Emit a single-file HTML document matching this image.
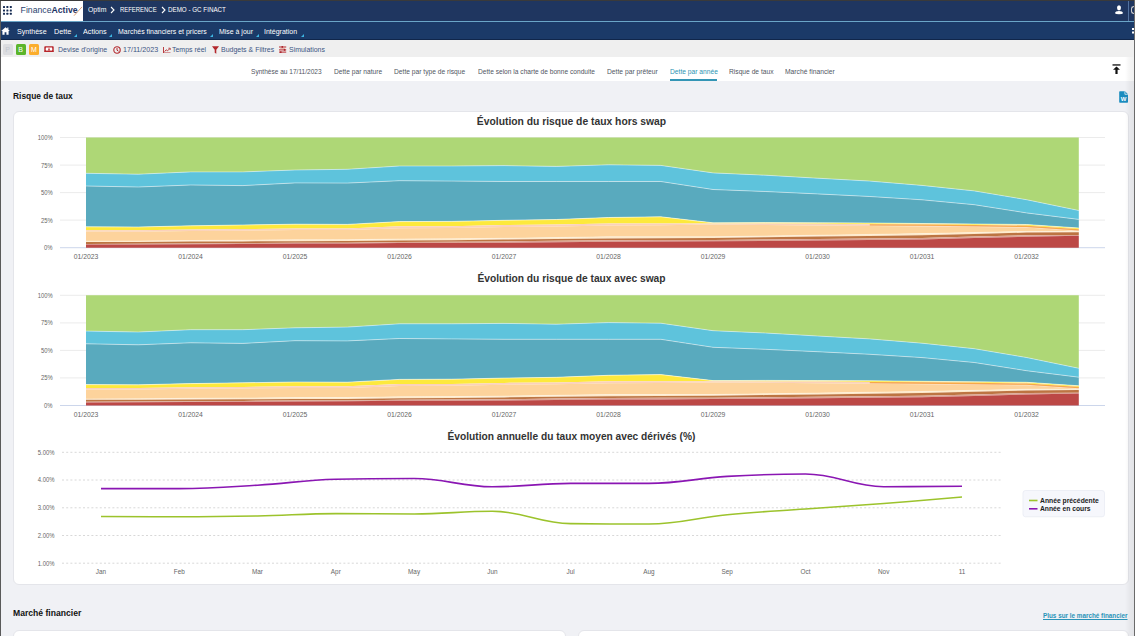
<!DOCTYPE html>
<html><head><meta charset="utf-8">
<style>
*{margin:0;padding:0;box-sizing:border-box}
html,body{width:1135px;height:636px;overflow:hidden}
body{position:relative;background:#f0f1f5;font-family:"Liberation Sans",sans-serif;color:#222}
.a{position:absolute;white-space:nowrap;transform-origin:0 0}
#frameL{left:0;top:0;width:1px;height:636px;background:#5a5a5a}
#frameT{left:0;top:0;width:1135px;height:1px;background:#3a3a3a}
#frameR{left:1134px;top:0;width:1px;height:636px;background:#6a6a6a}
#frameR2{left:1125px;top:57px;width:9px;height:579px;background:linear-gradient(90deg,rgba(0,0,0,0),rgba(0,0,0,0.035) 45%,rgba(0,0,0,0.06))}
#top{left:1px;top:1px;width:1133px;height:20px;background:#1f3660}
#logo{left:1px;top:1px;width:82px;height:20px;background:#fff}
#tline{left:1px;top:21px;width:1133px;height:1px;background:#6aa6c8}
#nav{left:1px;top:22px;width:1133px;height:17.5px;background:#1b3a68}
#navb{left:1px;top:39px;width:1133px;height:1px;background:#10264a}
#tool{left:1px;top:40px;width:1133px;height:17px;background:#efefef}
#tabs{left:1px;top:57px;width:1133px;height:24px;background:#fff}
.tw{color:#fff;font-size:7.2px;top:5.2px}
.nv{color:#fff;font-size:7.6px;top:26.5px}
.tri{width:0;height:0;border-left:3px solid transparent;border-bottom:3px solid #3db5e2;top:33.8px}
.tb{color:#3c5583;font-size:7.6px;top:45px}
.tab{color:#50555f;font-size:7.2px;top:67px}
.h{font-weight:bold;font-size:9px;color:#111}
.card{background:#fff;border:1px solid #e4e5ea;border-radius:6px}
.ttl{font-weight:bold;font-size:10.5px;color:#333;text-align:center;transform-origin:50% 0}
svg text.ax{font-family:"Liberation Sans",sans-serif;font-size:6.4px;fill:#666}
svg text.axx{font-family:"Liberation Sans",sans-serif;font-size:6.8px;fill:#666}
svg text.ax2{font-family:"Liberation Sans",sans-serif;font-size:6.4px;fill:#666}
svg text.leg{font-family:"Liberation Sans",sans-serif;font-size:7.4px;fill:#222;font-weight:bold}
.badge{top:44px;width:10px;height:11px;border-radius:1.5px;color:#fff;font-size:7px;text-align:center;line-height:11px}
</style></head>
<body>
<div class="a" id="top"></div>
<div class="a" id="logo"></div>
<!-- grid icon -->
<svg class="a" style="left:2.5px;top:6px" width="9" height="9" viewBox="0 0 9 9">
<g fill="#142a52">
<rect x="0" y="0" width="2" height="2" rx="0.5"/><rect x="3.4" y="0" width="2" height="2" rx="0.5"/><rect x="6.8" y="0" width="2" height="2" rx="0.5"/>
<rect x="0" y="3.4" width="2" height="2" rx="0.5"/><rect x="3.4" y="3.4" width="2" height="2" rx="0.5"/><rect x="6.8" y="3.4" width="2" height="2" rx="0.5"/>
<rect x="0" y="6.8" width="2" height="2" rx="0.5"/><rect x="3.4" y="6.8" width="2" height="2" rx="0.5"/><rect x="6.8" y="6.8" width="2" height="2" rx="0.5"/>
</g></svg>
<div class="a" id="fa" style="left:20.6px;top:4.9px;font-size:8.7px;color:#2a3f6e">Finance<span style="font-weight:bold;color:#1d3264">Active</span></div>
<svg class="a" style="left:73px;top:6px" width="10" height="11" viewBox="0 0 10 11"><line x1="1" y1="9.7" x2="9" y2="0.9" stroke="#dd9a66" stroke-width="0.9"/></svg>
<div class="a tw" style="left:88px;transform:scaleX(0.958)">Optim</div>
<svg class="a" style="left:109.5px;top:6px" width="5" height="8" viewBox="0 0 5 8"><path d="M1 1 L4 4 L1 7" fill="none" stroke="#fff" stroke-width="1.1"/></svg>
<div class="a tw" style="left:120px;transform:scaleX(0.826)">REFERENCE</div>
<svg class="a" style="left:160.5px;top:6px" width="5" height="8" viewBox="0 0 5 8"><path d="M1 1 L4 4 L1 7" fill="none" stroke="#fff" stroke-width="1.1"/></svg>
<div class="a tw" style="left:168px;transform:scaleX(0.868)">DEMO - GC FINACT</div>
<!-- user icon -->
<svg class="a" style="left:1114px;top:4px" width="10" height="11" viewBox="0 0 10 11"><ellipse cx="5" cy="3.8" rx="2" ry="2.6" fill="#fff"/><path d="M1 9.2 Q1.3 7 5 7 Q8.7 7 9 9.2 Q8.5 10.2 5 10.2 Q1.5 10.2 1 9.2 Z" fill="#fff"/></svg>
<div class="a" style="left:1127.5px;top:1px;width:1px;height:20px;background:#5272a0"></div>
<div class="a" style="left:1131px;top:6px;width:3px;height:8px;border:1px solid #ccc;border-right:none;border-radius:4px 0 0 4px"></div>

<div class="a" id="tline"></div>
<div class="a" id="nav"></div>
<div class="a" id="navb"></div>
<!-- home icon -->
<svg class="a" style="left:1px;top:26.5px" width="9" height="8" viewBox="0 0 9 8"><path d="M4.5 0.3 L6.3 1.8 L6.3 0.6 L7.4 0.6 L7.4 2.8 L8.8 4 L7.6 4 L7.6 7.8 L5.4 7.8 L5.4 5.3 L3.6 5.3 L3.6 7.8 L1.4 7.8 L1.4 4 L0.2 4 Z" fill="#fff"/></svg>
<div class="a nv" style="left:17px;transform:scaleX(0.934)">Synthèse</div>
<div class="a nv" style="left:54px;transform:scaleX(0.956)">Dette</div>
<div class="a tri" style="left:74px"></div>
<div class="a nv" style="left:82.5px;transform:scaleX(0.948)">Actions</div>
<div class="a tri" style="left:109px"></div>
<div class="a nv" style="left:117.5px;transform:scaleX(0.915)">Marchés financiers et pricers</div>
<div class="a tri" style="left:209.5px"></div>
<div class="a nv" style="left:219px;transform:scaleX(0.914)">Mise à jour</div>
<div class="a tri" style="left:255.5px"></div>
<div class="a nv" style="left:264px;transform:scaleX(0.922)">Intégration</div>
<div class="a tri" style="left:301px"></div>
<svg class="a" style="left:1131px;top:27px" width="4" height="8" viewBox="0 0 4 8"><rect x="1" y="1" width="3" height="2" fill="#fff"/><rect x="1" y="4.5" width="3" height="2" fill="#fff"/></svg>

<div class="a" id="tool"></div>
<div class="a badge" style="left:2.5px;background:#dcdde0;color:#c3c7ce">P</div>
<div class="a badge" style="left:15.5px;background:#5bb52b">B</div>
<div class="a badge" style="left:29px;background:#fbad2c">M</div>
<svg class="a" style="left:44px;top:45.8px" width="10" height="6.5" viewBox="0 0 10 6.5"><rect x="0.3" y="0.2" width="9.4" height="6" rx="0.8" fill="#b8262b"/><path d="M2 1.5 Q1.3 3.2 2 4.8 L8 4.8 Q8.7 3.2 8 1.5 Z" fill="#fff"/><path d="M5 1.3 L6.2 4.4 L3.8 4.4 Z" fill="#c4393c"/><rect x="0.3" y="4.8" width="9.4" height="0.9" fill="#b8262b"/></svg>
<div class="a tb" style="left:58px;transform:scaleX(0.915)">Devise d'origine</div>
<svg class="a" style="left:112.5px;top:45.5px" width="8" height="8" viewBox="0 0 8 8"><circle cx="4" cy="4" r="3.2" fill="none" stroke="#b3282d" stroke-width="1.1"/><path d="M4 2 L4 4.2 L5.5 5.2" fill="none" stroke="#b3282d" stroke-width="1"/></svg>
<div class="a tb" style="left:122.5px;transform:scaleX(0.939)">17/11/2023</div>
<svg class="a" style="left:163px;top:46.5px" width="7.5" height="6.5" viewBox="0 0 7.5 6.5"><path d="M0.5 0 L0.5 6 L7.5 6" fill="none" stroke="#b3282d" stroke-width="0.9"/><path d="M1.6 4.6 L3.2 2.8 L4.6 3.8 L6.8 1.6" fill="none" stroke="#b3282d" stroke-width="0.9"/><path d="M5.4 1.2 L7.2 1.2 L7.2 3" fill="none" stroke="#b3282d" stroke-width="0.8"/></svg>
<div class="a tb" style="left:172px;transform:scaleX(0.919)">Temps réel</div>
<svg class="a" style="left:212px;top:45.5px" width="7" height="8" viewBox="0 0 7 8"><path d="M0 0.3 L7 0.3 L4.3 3.8 L4.3 7.8 L2.7 6.8 L2.7 3.8 Z" fill="#b3282d"/></svg>
<div class="a tb" style="left:221px;transform:scaleX(0.919)">Budgets &amp; Filtres</div>
<svg class="a" style="left:279px;top:45.5px" width="7.5" height="7" viewBox="0 0 7.5 7"><rect x="0" y="0.5" width="7.2" height="1" fill="#b8262b"/><rect x="0" y="3.4" width="7.2" height="1" fill="#b8262b"/><rect x="0" y="5.6" width="7.2" height="1" fill="#b8262b"/><circle cx="3.3" cy="1" r="0.9" fill="#a81e23"/><circle cx="5.6" cy="3.9" r="0.9" fill="#a81e23"/><circle cx="1.8" cy="6.1" r="0.9" fill="#a81e23"/><rect x="1.2" y="1.9" width="5" height="1.1" fill="#e8b8b0"/></svg>
<div class="a tb" style="left:289px;transform:scaleX(0.916)">Simulations</div>

<div class="a" id="tabs"></div>
<div class="a tab" style="left:251px;transform:scaleX(0.913)">Synthèse au 17/11/2023</div>
<div class="a tab" style="left:334px;transform:scaleX(0.926)">Dette par nature</div>
<div class="a tab" style="left:394px;transform:scaleX(0.929)">Dette par type de risque</div>
<div class="a tab" style="left:477.5px;transform:scaleX(0.921)">Dette selon la charte de bonne conduite</div>
<div class="a tab" style="left:607px;transform:scaleX(0.934)">Dette par prêteur</div>
<div class="a tab" style="left:669.5px;color:#2b93b3;transform:scaleX(0.93)">Dette par année</div>
<div class="a" style="left:669.5px;top:79px;width:47px;height:1.5px;background:#3395b5"></div>
<div class="a tab" style="left:729px;transform:scaleX(0.929)">Risque de taux</div>
<div class="a tab" style="left:785px;transform:scaleX(0.936)">Marché financier</div>
<svg class="a" style="left:1112px;top:64px" width="9" height="11" viewBox="0 0 9 11"><rect x="0.5" y="0.3" width="8" height="1.3" fill="#111"/><path d="M4.5 2.4 L8 5.8 L5.6 5.8 L5.6 10 L3.4 10 L3.4 5.8 L1 5.8 Z" fill="#111"/></svg>

<div class="a h" style="left:13px;top:91px;transform:scaleX(0.933)">Risque de taux</div>
<svg class="a" style="left:1118.5px;top:91px" width="9.2" height="12" viewBox="0 0 9.2 12"><path d="M0.2 0.9 Q0.2 0.2 0.9 0.2 L6 0.2 L9 3.2 L9 11.1 Q9 11.8 8.3 11.8 L0.9 11.8 Q0.2 11.8 0.2 11.1 Z" fill="#1a8cbf"/><path d="M5.9 0.4 L5.9 3.3 L8.9 3.3" fill="none" stroke="#fff" stroke-width="0.7"/><text x="4.6" y="10.4" text-anchor="middle" font-family="Liberation Sans" font-weight="bold" font-size="6" fill="#fff">W</text></svg>

<div class="a card" style="left:13px;top:111px;width:1116px;height:474px"></div>
<div class="a ttl" style="left:13px;top:115px;width:1117px;transform:scaleX(0.983)">Évolution du risque de taux hors swap</div>
<div class="a ttl" style="left:13px;top:272.4px;width:1117px;transform:scaleX(0.974)">Évolution du risque de taux avec swap</div>
<div class="a ttl" style="left:13px;top:429.8px;width:1117px;transform:scaleX(0.970)">Évolution annuelle du taux moyen avec dérivés (%)</div>

<svg class="a" style="left:0;top:0" width="1135" height="636" viewBox="0 0 1135 636">
<rect x="60" y="137" width="1045" height="1" fill="#ebebeb"/>
<rect x="60" y="164.6" width="1045" height="1" fill="#ebebeb"/>
<rect x="60" y="192.1" width="1045" height="1" fill="#ebebeb"/>
<rect x="60" y="219.6" width="1045" height="1" fill="#ebebeb"/>
<rect x="60" y="247.2" width="1045" height="1" fill="#ccd6eb"/>
<g transform="translate(0,0)">
<path d="M86 137.5 L138.3 137.5 L190.5 137.5 L242.8 137.5 L295 137.5 L347.3 137.5 L399.5 137.5 L451.8 137.5 L504 137.5 L556.3 137.5 L608.5 137.5 L660.8 137.5 L713 137.5 L765.3 137.5 L817.5 137.5 L869.8 137.5 L922 137.5 L974.3 137.5 L1026.5 137.5 L1078.8 137.5 L1078.8 210.5 L1026.5 199.7 L974.3 190.9 L922 185.4 L869.8 181.1 L817.5 178.2 L765.3 175.2 L713 172.9 L660.8 165.4 L608.5 164.8 L556.3 166.4 L504 165.6 L451.8 166 L399.5 166 L347.3 169.3 L295 170 L242.8 171.9 L190.5 171.9 L138.3 174.2 L86 173.3Z" fill="#aed776"/>
<path d="M86 173.3 L138.3 174.2 L190.5 171.9 L242.8 171.9 L295 170 L347.3 169.3 L399.5 166 L451.8 166 L504 165.6 L556.3 166.4 L608.5 164.8 L660.8 165.4 L713 172.9 L765.3 175.2 L817.5 178.2 L869.8 181.1 L922 185.4 L974.3 190.9 L1026.5 199.7 L1078.8 210.5 L1078.8 219.4 L1026.5 212.9 L974.3 204.7 L922 199.8 L869.8 196.5 L817.5 193.9 L765.3 191.5 L713 189.5 L660.8 181.5 L608.5 181.5 L556.3 181.5 L504 181.5 L451.8 181.1 L399.5 180.7 L347.3 183.1 L295 182.9 L242.8 185.6 L190.5 185 L138.3 187 L86 186Z" fill="#5ec3dc"/>
<path d="M86 186 L138.3 187 L190.5 185 L242.8 185.6 L295 182.9 L347.3 183.1 L399.5 180.7 L451.8 181.1 L504 181.5 L556.3 181.5 L608.5 181.5 L660.8 181.5 L713 189.5 L765.3 191.5 L817.5 193.9 L869.8 196.5 L922 199.8 L974.3 204.7 L1026.5 212.9 L1078.8 219.4 L1078.8 228 L1026.5 224.5 L974.3 224 L922 223.5 L869.8 223 L817.5 222.8 L765.3 222.6 L713 222.8 L660.8 216.8 L608.5 217.5 L556.3 219.5 L504 220.3 L451.8 221.4 L399.5 221.6 L347.3 224.4 L295 224.2 L242.8 225 L190.5 225.8 L138.3 227 L86 226.8Z" fill="#59aabe"/>
<path d="M86 226.8 L138.3 227 L190.5 225.8 L242.8 225 L295 224.2 L347.3 224.4 L399.5 221.6 L451.8 221.4 L504 220.3 L556.3 219.5 L608.5 217.5 L660.8 216.8 L713 222.8 L765.3 222.6 L817.5 222.8 L869.8 223 L922 223.5 L974.3 224 L1026.5 224.5 L1078.8 228 L1078.8 229.2 L1026.5 225.7 L974.3 225 L922 224.5 L869.8 224.2 L817.5 223.8 L765.3 223.6 L713 223.5 L660.8 223.5 L608.5 223.5 L556.3 224.6 L504 225.1 L451.8 226.3 L399.5 226.3 L347.3 228.5 L295 228.5 L242.8 229.1 L190.5 229.5 L138.3 230.2 L86 230.2Z" fill="#fde93c"/>
<path d="M86 230.2 L138.3 230.2 L190.5 229.5 L242.8 229.1 L295 228.5 L347.3 228.5 L399.5 226.3 L451.8 226.3 L504 225.1 L556.3 224.6 L608.5 223.5 L660.8 223.5 L713 223.5 L765.3 223.6 L817.5 223.8 L869.8 224.2 L922 224.5 L974.3 225 L1026.5 225.7 L1078.8 229.2 L1078.8 231 L1026.5 227.5 L974.3 227 L922 226.5 L869.8 226 L817.5 225.5 L765.3 225 L713 224.6 L660.8 225.2 L608.5 225.5 L556.3 226.5 L504 227 L451.8 228 L399.5 228.2 L347.3 230.1 L295 230.1 L242.8 230.7 L190.5 231 L138.3 231.7 L86 231.6Z" fill="#fbd1bb"/>
<path d="M86 231.6 L138.3 231.7 L190.5 231 L242.8 230.7 L295 230.1 L347.3 230.1 L399.5 228.2 L451.8 228 L504 227 L556.3 226.5 L608.5 225.5 L660.8 225.2 L713 224.6 L765.3 225 L817.5 225.5 L869.8 226 L922 226.5 L974.3 227 L1026.5 227.5 L1078.8 231 L1078.8 231.2 L1026.5 231.4 L974.3 232.5 L922 233.6 L869.8 234.4 L817.5 235.2 L765.3 236 L713 236.7 L660.8 236.7 L608.5 236.7 L556.3 237.5 L504 238.3 L451.8 238.8 L399.5 239 L347.3 239.7 L295 239.8 L242.8 240.2 L190.5 240.5 L138.3 241 L86 241.1Z" fill="#fdd39c"/>
<path d="M86 241.1 L138.3 241 L190.5 240.5 L242.8 240.2 L295 239.8 L347.3 239.7 L399.5 239 L451.8 238.8 L504 238.3 L556.3 237.5 L608.5 236.7 L660.8 236.7 L713 236.7 L765.3 236 L817.5 235.2 L869.8 234.4 L922 233.6 L974.3 232.5 L1026.5 231.4 L1078.8 231.2 L1078.8 232.2 L1026.5 232.6 L974.3 234 L922 235.3 L869.8 236 L817.5 236.6 L765.3 237.3 L713 238 L660.8 238.2 L608.5 238.5 L556.3 239 L504 239.6 L451.8 240.2 L399.5 240.4 L347.3 241.1 L295 241.2 L242.8 241.4 L190.5 241.6 L138.3 242 L86 242Z" fill="#fde9c8"/>
<path d="M86 242 L138.3 242 L190.5 241.6 L242.8 241.4 L295 241.2 L347.3 241.1 L399.5 240.4 L451.8 240.2 L504 239.6 L556.3 239 L608.5 238.5 L660.8 238.2 L713 238 L765.3 237.3 L817.5 236.6 L869.8 236 L922 235.3 L974.3 234 L1026.5 232.6 L1078.8 232.2 L1078.8 235 L1026.5 235.2 L974.3 236.6 L922 238 L869.8 238.4 L817.5 238.9 L765.3 239.4 L713 239.9 L660.8 240 L608.5 240.2 L556.3 240.8 L504 241.4 L451.8 241.8 L399.5 242 L347.3 242.7 L295 242.8 L242.8 243.1 L190.5 243.5 L138.3 243.8 L86 244Z" fill="#bd7442"/>
<path d="M86 244 L138.3 243.8 L190.5 243.5 L242.8 243.1 L295 242.8 L347.3 242.7 L399.5 242 L451.8 241.8 L504 241.4 L556.3 240.8 L608.5 240.2 L660.8 240 L713 239.9 L765.3 239.4 L817.5 238.9 L869.8 238.4 L922 238 L974.3 236.6 L1026.5 235.2 L1078.8 235 L1078.8 235.8 L1026.5 236.7 L974.3 238.1 L922 239.5 L869.8 239.9 L817.5 240.4 L765.3 240.9 L713 241.3 L660.8 241.6 L608.5 241.8 L556.3 242.2 L504 242.7 L451.8 242.9 L399.5 243 L347.3 243.5 L295 243.6 L242.8 244 L190.5 244.3 L138.3 244.5 L86 244.6Z" fill="#dca393"/>
<path d="M86 244.6 L138.3 244.5 L190.5 244.3 L242.8 244 L295 243.6 L347.3 243.5 L399.5 243 L451.8 242.9 L504 242.7 L556.3 242.2 L608.5 241.8 L660.8 241.6 L713 241.3 L765.3 240.9 L817.5 240.4 L869.8 239.9 L922 239.5 L974.3 238.1 L1026.5 236.7 L1078.8 235.8 L1078.8 247.7 L1026.5 247.7 L974.3 247.7 L922 247.7 L869.8 247.7 L817.5 247.7 L765.3 247.7 L713 247.7 L660.8 247.7 L608.5 247.7 L556.3 247.7 L504 247.7 L451.8 247.7 L399.5 247.7 L347.3 247.7 L295 247.7 L242.8 247.7 L190.5 247.7 L138.3 247.7 L86 247.7Z" fill="#bc4846"/>
<path d="M86 173.3 L138.3 174.2 L190.5 171.9 L242.8 171.9 L295 170 L347.3 169.3 L399.5 166 L451.8 166 L504 165.6 L556.3 166.4 L608.5 164.8 L660.8 165.4 L713 172.9 L765.3 175.2 L817.5 178.2 L869.8 181.1 L922 185.4 L974.3 190.9 L1026.5 199.7 L1078.8 210.5" fill="none" stroke="rgba(255,255,255,0.55)" stroke-width="0.8"/>
<path d="M86 186 L138.3 187 L190.5 185 L242.8 185.6 L295 182.9 L347.3 183.1 L399.5 180.7 L451.8 181.1 L504 181.5 L556.3 181.5 L608.5 181.5 L660.8 181.5 L713 189.5 L765.3 191.5 L817.5 193.9 L869.8 196.5 L922 199.8 L974.3 204.7 L1026.5 212.9 L1078.8 219.4" fill="none" stroke="rgba(255,255,255,0.6)" stroke-width="0.8"/>
<path d="M86 226.8 L138.3 227 L190.5 225.8 L242.8 225 L295 224.2 L347.3 224.4 L399.5 221.6 L451.8 221.4 L504 220.3 L556.3 219.5 L608.5 217.5 L660.8 216.8 L713 222.8 L765.3 222.6 L817.5 222.8 L869.8 223 L922 223.5 L974.3 224 L1026.5 224.5 L1078.8 228" fill="none" stroke="rgba(255,255,255,0.7)" stroke-width="0.8"/>
<path d="M86 241.1 L138.3 241 L190.5 240.5 L242.8 240.2 L295 239.8 L347.3 239.7 L399.5 239 L451.8 238.8 L504 238.3 L556.3 237.5 L608.5 236.7 L660.8 236.7 L713 236.7 L765.3 236 L817.5 235.2 L869.8 234.4 L922 233.6 L974.3 232.5 L1026.5 231.4 L1078.8 231.2" fill="none" stroke="rgba(255,255,255,0.4)" stroke-width="0.8"/>
<path d="M869.8 224.9 L922 225.2 L974.3 225.7 L1026.5 226.4 L1078.8 229.9" fill="none" stroke="#f7a94a" stroke-width="1.3"/>
</g>
<text x="52.6" y="140" text-anchor="end" class="ax" textLength="14.9" lengthAdjust="spacingAndGlyphs">100%</text>
<text x="52.6" y="167.6" text-anchor="end" class="ax" textLength="11.7" lengthAdjust="spacingAndGlyphs">75%</text>
<text x="52.6" y="195.1" text-anchor="end" class="ax" textLength="11.7" lengthAdjust="spacingAndGlyphs">50%</text>
<text x="52.6" y="222.6" text-anchor="end" class="ax" textLength="11.7" lengthAdjust="spacingAndGlyphs">25%</text>
<text x="52.6" y="250.2" text-anchor="end" class="ax" textLength="8.5" lengthAdjust="spacingAndGlyphs">0%</text>
<text x="86" y="259" text-anchor="middle" class="axx">01/2023</text>
<text x="190.5" y="259" text-anchor="middle" class="axx">01/2024</text>
<text x="295" y="259" text-anchor="middle" class="axx">01/2025</text>
<text x="399.5" y="259" text-anchor="middle" class="axx">01/2026</text>
<text x="504" y="259" text-anchor="middle" class="axx">01/2027</text>
<text x="608.5" y="259" text-anchor="middle" class="axx">01/2028</text>
<text x="713" y="259" text-anchor="middle" class="axx">01/2029</text>
<text x="817.5" y="259" text-anchor="middle" class="axx">01/2030</text>
<text x="922" y="259" text-anchor="middle" class="axx">01/2031</text>
<text x="1026.5" y="259" text-anchor="middle" class="axx">01/2032</text>
<rect x="60" y="294.8" width="1045" height="1" fill="#ebebeb"/>
<rect x="60" y="322.4" width="1045" height="1" fill="#ebebeb"/>
<rect x="60" y="349.9" width="1045" height="1" fill="#ebebeb"/>
<rect x="60" y="377.4" width="1045" height="1" fill="#ebebeb"/>
<rect x="60" y="405" width="1045" height="1" fill="#ccd6eb"/>
<g transform="translate(0,157.8)">
<path d="M86 137.5 L138.3 137.5 L190.5 137.5 L242.8 137.5 L295 137.5 L347.3 137.5 L399.5 137.5 L451.8 137.5 L504 137.5 L556.3 137.5 L608.5 137.5 L660.8 137.5 L713 137.5 L765.3 137.5 L817.5 137.5 L869.8 137.5 L922 137.5 L974.3 137.5 L1026.5 137.5 L1078.8 137.5 L1078.8 210.5 L1026.5 199.7 L974.3 190.9 L922 185.4 L869.8 181.1 L817.5 178.2 L765.3 175.2 L713 172.9 L660.8 165.4 L608.5 164.8 L556.3 166.4 L504 165.6 L451.8 166 L399.5 166 L347.3 169.3 L295 170 L242.8 171.9 L190.5 171.9 L138.3 174.2 L86 173.3Z" fill="#aed776"/>
<path d="M86 173.3 L138.3 174.2 L190.5 171.9 L242.8 171.9 L295 170 L347.3 169.3 L399.5 166 L451.8 166 L504 165.6 L556.3 166.4 L608.5 164.8 L660.8 165.4 L713 172.9 L765.3 175.2 L817.5 178.2 L869.8 181.1 L922 185.4 L974.3 190.9 L1026.5 199.7 L1078.8 210.5 L1078.8 219.4 L1026.5 212.9 L974.3 204.7 L922 199.8 L869.8 196.5 L817.5 193.9 L765.3 191.5 L713 189.5 L660.8 181.5 L608.5 181.5 L556.3 181.5 L504 181.5 L451.8 181.1 L399.5 180.7 L347.3 183.1 L295 182.9 L242.8 185.6 L190.5 185 L138.3 187 L86 186Z" fill="#5ec3dc"/>
<path d="M86 186 L138.3 187 L190.5 185 L242.8 185.6 L295 182.9 L347.3 183.1 L399.5 180.7 L451.8 181.1 L504 181.5 L556.3 181.5 L608.5 181.5 L660.8 181.5 L713 189.5 L765.3 191.5 L817.5 193.9 L869.8 196.5 L922 199.8 L974.3 204.7 L1026.5 212.9 L1078.8 219.4 L1078.8 228 L1026.5 224.5 L974.3 224 L922 223.5 L869.8 223 L817.5 222.8 L765.3 222.6 L713 222.8 L660.8 216.8 L608.5 217.5 L556.3 219.5 L504 220.3 L451.8 221.4 L399.5 221.6 L347.3 224.4 L295 224.2 L242.8 225 L190.5 225.8 L138.3 227 L86 226.8Z" fill="#59aabe"/>
<path d="M86 226.8 L138.3 227 L190.5 225.8 L242.8 225 L295 224.2 L347.3 224.4 L399.5 221.6 L451.8 221.4 L504 220.3 L556.3 219.5 L608.5 217.5 L660.8 216.8 L713 222.8 L765.3 222.6 L817.5 222.8 L869.8 223 L922 223.5 L974.3 224 L1026.5 224.5 L1078.8 228 L1078.8 229.2 L1026.5 225.7 L974.3 225 L922 224.5 L869.8 224.2 L817.5 223.8 L765.3 223.6 L713 223.5 L660.8 223.5 L608.5 223.5 L556.3 224.6 L504 225.1 L451.8 226.3 L399.5 226.3 L347.3 228.5 L295 228.5 L242.8 229.1 L190.5 229.5 L138.3 230.2 L86 230.2Z" fill="#fde93c"/>
<path d="M86 230.2 L138.3 230.2 L190.5 229.5 L242.8 229.1 L295 228.5 L347.3 228.5 L399.5 226.3 L451.8 226.3 L504 225.1 L556.3 224.6 L608.5 223.5 L660.8 223.5 L713 223.5 L765.3 223.6 L817.5 223.8 L869.8 224.2 L922 224.5 L974.3 225 L1026.5 225.7 L1078.8 229.2 L1078.8 231 L1026.5 227.5 L974.3 227 L922 226.5 L869.8 226 L817.5 225.5 L765.3 225 L713 224.6 L660.8 225.2 L608.5 225.5 L556.3 226.5 L504 227 L451.8 228 L399.5 228.2 L347.3 230.1 L295 230.1 L242.8 230.7 L190.5 231 L138.3 231.7 L86 231.6Z" fill="#fbd1bb"/>
<path d="M86 231.6 L138.3 231.7 L190.5 231 L242.8 230.7 L295 230.1 L347.3 230.1 L399.5 228.2 L451.8 228 L504 227 L556.3 226.5 L608.5 225.5 L660.8 225.2 L713 224.6 L765.3 225 L817.5 225.5 L869.8 226 L922 226.5 L974.3 227 L1026.5 227.5 L1078.8 231 L1078.8 231.2 L1026.5 231.4 L974.3 232.5 L922 233.6 L869.8 234.4 L817.5 235.2 L765.3 236 L713 236.7 L660.8 236.7 L608.5 236.7 L556.3 237.5 L504 238.3 L451.8 238.8 L399.5 239 L347.3 239.7 L295 239.8 L242.8 240.2 L190.5 240.5 L138.3 241 L86 241.1Z" fill="#fdd39c"/>
<path d="M86 241.1 L138.3 241 L190.5 240.5 L242.8 240.2 L295 239.8 L347.3 239.7 L399.5 239 L451.8 238.8 L504 238.3 L556.3 237.5 L608.5 236.7 L660.8 236.7 L713 236.7 L765.3 236 L817.5 235.2 L869.8 234.4 L922 233.6 L974.3 232.5 L1026.5 231.4 L1078.8 231.2 L1078.8 232.2 L1026.5 232.6 L974.3 234 L922 235.3 L869.8 236 L817.5 236.6 L765.3 237.3 L713 238 L660.8 238.2 L608.5 238.5 L556.3 239 L504 239.6 L451.8 240.2 L399.5 240.4 L347.3 241.1 L295 241.2 L242.8 241.4 L190.5 241.6 L138.3 242 L86 242Z" fill="#fde9c8"/>
<path d="M86 242 L138.3 242 L190.5 241.6 L242.8 241.4 L295 241.2 L347.3 241.1 L399.5 240.4 L451.8 240.2 L504 239.6 L556.3 239 L608.5 238.5 L660.8 238.2 L713 238 L765.3 237.3 L817.5 236.6 L869.8 236 L922 235.3 L974.3 234 L1026.5 232.6 L1078.8 232.2 L1078.8 235 L1026.5 235.2 L974.3 236.6 L922 238 L869.8 238.4 L817.5 238.9 L765.3 239.4 L713 239.9 L660.8 240 L608.5 240.2 L556.3 240.8 L504 241.4 L451.8 241.8 L399.5 242 L347.3 242.7 L295 242.8 L242.8 243.1 L190.5 243.5 L138.3 243.8 L86 244Z" fill="#bd7442"/>
<path d="M86 244 L138.3 243.8 L190.5 243.5 L242.8 243.1 L295 242.8 L347.3 242.7 L399.5 242 L451.8 241.8 L504 241.4 L556.3 240.8 L608.5 240.2 L660.8 240 L713 239.9 L765.3 239.4 L817.5 238.9 L869.8 238.4 L922 238 L974.3 236.6 L1026.5 235.2 L1078.8 235 L1078.8 235.8 L1026.5 236.7 L974.3 238.1 L922 239.5 L869.8 239.9 L817.5 240.4 L765.3 240.9 L713 241.3 L660.8 241.6 L608.5 241.8 L556.3 242.2 L504 242.7 L451.8 242.9 L399.5 243 L347.3 243.5 L295 243.6 L242.8 244 L190.5 244.3 L138.3 244.5 L86 244.6Z" fill="#dca393"/>
<path d="M86 244.6 L138.3 244.5 L190.5 244.3 L242.8 244 L295 243.6 L347.3 243.5 L399.5 243 L451.8 242.9 L504 242.7 L556.3 242.2 L608.5 241.8 L660.8 241.6 L713 241.3 L765.3 240.9 L817.5 240.4 L869.8 239.9 L922 239.5 L974.3 238.1 L1026.5 236.7 L1078.8 235.8 L1078.8 247.7 L1026.5 247.7 L974.3 247.7 L922 247.7 L869.8 247.7 L817.5 247.7 L765.3 247.7 L713 247.7 L660.8 247.7 L608.5 247.7 L556.3 247.7 L504 247.7 L451.8 247.7 L399.5 247.7 L347.3 247.7 L295 247.7 L242.8 247.7 L190.5 247.7 L138.3 247.7 L86 247.7Z" fill="#bc4846"/>
<path d="M86 173.3 L138.3 174.2 L190.5 171.9 L242.8 171.9 L295 170 L347.3 169.3 L399.5 166 L451.8 166 L504 165.6 L556.3 166.4 L608.5 164.8 L660.8 165.4 L713 172.9 L765.3 175.2 L817.5 178.2 L869.8 181.1 L922 185.4 L974.3 190.9 L1026.5 199.7 L1078.8 210.5" fill="none" stroke="rgba(255,255,255,0.55)" stroke-width="0.8"/>
<path d="M86 186 L138.3 187 L190.5 185 L242.8 185.6 L295 182.9 L347.3 183.1 L399.5 180.7 L451.8 181.1 L504 181.5 L556.3 181.5 L608.5 181.5 L660.8 181.5 L713 189.5 L765.3 191.5 L817.5 193.9 L869.8 196.5 L922 199.8 L974.3 204.7 L1026.5 212.9 L1078.8 219.4" fill="none" stroke="rgba(255,255,255,0.6)" stroke-width="0.8"/>
<path d="M86 226.8 L138.3 227 L190.5 225.8 L242.8 225 L295 224.2 L347.3 224.4 L399.5 221.6 L451.8 221.4 L504 220.3 L556.3 219.5 L608.5 217.5 L660.8 216.8 L713 222.8 L765.3 222.6 L817.5 222.8 L869.8 223 L922 223.5 L974.3 224 L1026.5 224.5 L1078.8 228" fill="none" stroke="rgba(255,255,255,0.7)" stroke-width="0.8"/>
<path d="M86 241.1 L138.3 241 L190.5 240.5 L242.8 240.2 L295 239.8 L347.3 239.7 L399.5 239 L451.8 238.8 L504 238.3 L556.3 237.5 L608.5 236.7 L660.8 236.7 L713 236.7 L765.3 236 L817.5 235.2 L869.8 234.4 L922 233.6 L974.3 232.5 L1026.5 231.4 L1078.8 231.2" fill="none" stroke="rgba(255,255,255,0.4)" stroke-width="0.8"/>
<path d="M869.8 224.9 L922 225.2 L974.3 225.7 L1026.5 226.4 L1078.8 229.9" fill="none" stroke="#f7a94a" stroke-width="1.3"/>
</g>
<text x="52.6" y="297.8" text-anchor="end" class="ax" textLength="14.9" lengthAdjust="spacingAndGlyphs">100%</text>
<text x="52.6" y="325.4" text-anchor="end" class="ax" textLength="11.7" lengthAdjust="spacingAndGlyphs">75%</text>
<text x="52.6" y="352.9" text-anchor="end" class="ax" textLength="11.7" lengthAdjust="spacingAndGlyphs">50%</text>
<text x="52.6" y="380.4" text-anchor="end" class="ax" textLength="11.7" lengthAdjust="spacingAndGlyphs">25%</text>
<text x="52.6" y="408" text-anchor="end" class="ax" textLength="8.5" lengthAdjust="spacingAndGlyphs">0%</text>
<text x="86" y="416.8" text-anchor="middle" class="axx">01/2023</text>
<text x="190.5" y="416.8" text-anchor="middle" class="axx">01/2024</text>
<text x="295" y="416.8" text-anchor="middle" class="axx">01/2025</text>
<text x="399.5" y="416.8" text-anchor="middle" class="axx">01/2026</text>
<text x="504" y="416.8" text-anchor="middle" class="axx">01/2027</text>
<text x="608.5" y="416.8" text-anchor="middle" class="axx">01/2028</text>
<text x="713" y="416.8" text-anchor="middle" class="axx">01/2029</text>
<text x="817.5" y="416.8" text-anchor="middle" class="axx">01/2030</text>
<text x="922" y="416.8" text-anchor="middle" class="axx">01/2031</text>
<text x="1026.5" y="416.8" text-anchor="middle" class="axx">01/2032</text>
<line x1="62" y1="452.3" x2="1001" y2="452.3" stroke="#d4d4d4" stroke-width="0.9" stroke-dasharray="2,2.2"/>
<text x="54.6" y="454.7" text-anchor="end" class="ax2" textLength="16.8" lengthAdjust="spacingAndGlyphs">5.00%</text>
<line x1="62" y1="480.0" x2="1001" y2="480.0" stroke="#d4d4d4" stroke-width="0.9" stroke-dasharray="2,2.2"/>
<text x="54.6" y="482.4" text-anchor="end" class="ax2" textLength="16.8" lengthAdjust="spacingAndGlyphs">4.00%</text>
<line x1="62" y1="507.8" x2="1001" y2="507.8" stroke="#d4d4d4" stroke-width="0.9" stroke-dasharray="2,2.2"/>
<text x="54.6" y="510.2" text-anchor="end" class="ax2" textLength="16.8" lengthAdjust="spacingAndGlyphs">3.00%</text>
<line x1="62" y1="535.5" x2="1001" y2="535.5" stroke="#d4d4d4" stroke-width="0.9" stroke-dasharray="2,2.2"/>
<text x="54.6" y="537.9" text-anchor="end" class="ax2" textLength="16.8" lengthAdjust="spacingAndGlyphs">2.00%</text>
<line x1="62" y1="563.2" x2="1001" y2="563.2" stroke="#d4d4d4" stroke-width="0.9" stroke-dasharray="2,2.2"/>
<text x="54.6" y="565.6" text-anchor="end" class="ax2" textLength="16.8" lengthAdjust="spacingAndGlyphs">1.00%</text>
<text x="101" y="573.6" text-anchor="middle" class="ax2">Jan</text>
<text x="179.3" y="573.6" text-anchor="middle" class="ax2">Feb</text>
<text x="257.5" y="573.6" text-anchor="middle" class="ax2">Mar</text>
<text x="335.8" y="573.6" text-anchor="middle" class="ax2">Apr</text>
<text x="414.1" y="573.6" text-anchor="middle" class="ax2">May</text>
<text x="492.4" y="573.6" text-anchor="middle" class="ax2">Jun</text>
<text x="570.6" y="573.6" text-anchor="middle" class="ax2">Jul</text>
<text x="648.9" y="573.6" text-anchor="middle" class="ax2">Aug</text>
<text x="727.2" y="573.6" text-anchor="middle" class="ax2">Sep</text>
<text x="805.5" y="573.6" text-anchor="middle" class="ax2">Oct</text>
<text x="883.7" y="573.6" text-anchor="middle" class="ax2">Nov</text>
<text x="962" y="573.6" text-anchor="middle" class="ax2">11</text>
<path d="M101 516.5 C101 516.5 148 516.8 179.3 516.8 C210.6 516.8 226.2 516.6 257.5 516 C288.9 515.4 304.5 513.6 335.8 513.6 C367.1 513.6 382.8 514 414.1 514 C445.4 514 461.1 511.3 492.4 511.3 C523.7 511.3 539.3 523.2 570.6 523.6 C601.9 524 617.6 524 648.9 524 C680.2 524 695.9 517.7 727.2 514.7 C758.5 511.7 774.1 511.2 805.5 509 C836.8 506.8 852.4 505.9 883.7 503.5 C915 501.1 962 497 962 497" fill="none" stroke="#9cc32c" stroke-width="1.6"/>
<path d="M101 488.6 C101 488.6 148 488.6 179.3 488.6 C210.6 488.6 226.2 487.1 257.5 485.2 C288.9 483.3 304.5 480.1 335.8 479.3 C367.1 478.5 382.8 478.5 414.1 478.5 C445.4 478.5 461.1 486.8 492.4 486.8 C523.7 486.8 539.3 483.4 570.6 483.4 C601.9 483.4 617.6 483.4 648.9 483.4 C680.2 483.4 695.9 478.3 727.2 476.4 C758.5 474.5 774.1 474 805.5 474 C836.8 474 852.4 486.7 883.7 486.7 C915 486.7 962 486.2 962 486.2" fill="none" stroke="#8a16b3" stroke-width="1.6"/>
<rect x="1023" y="490.5" width="81.5" height="26.3" rx="2.5" fill="#f6f7fc" stroke="#e6e9f2" stroke-width="0.7"/>
<line x1="1029" y1="500.5" x2="1037.5" y2="500.5" stroke="#9cc32c" stroke-width="1.6"/>
<line x1="1029" y1="508.8" x2="1037.5" y2="508.8" stroke="#8a16b3" stroke-width="1.6"/>
<text x="1040" y="502.8" class="leg" textLength="58.7" lengthAdjust="spacingAndGlyphs">Année précédente</text>
<text x="1040" y="511.1" class="leg" textLength="50.5" lengthAdjust="spacingAndGlyphs">Année en cours</text>
</svg>

<div class="a h" style="left:13px;top:608px;transform:scaleX(0.955)">Marché financier</div>
<div class="a" style="left:1042.8px;top:611.6px;font-size:7px;font-weight:bold;color:#2a93b8;text-decoration:underline;transform:scaleX(0.905)">Plus sur le marché financier</div>
<div class="a card" style="left:13px;top:630px;width:553px;height:30px"></div>
<div class="a card" style="left:577.5px;top:630px;width:551.5px;height:30px"></div>

<div class="a" id="frameL"></div>
<div class="a" id="frameT"></div>
<div class="a" id="frameR2"></div>
<div class="a" id="frameR"></div>
</body></html>
